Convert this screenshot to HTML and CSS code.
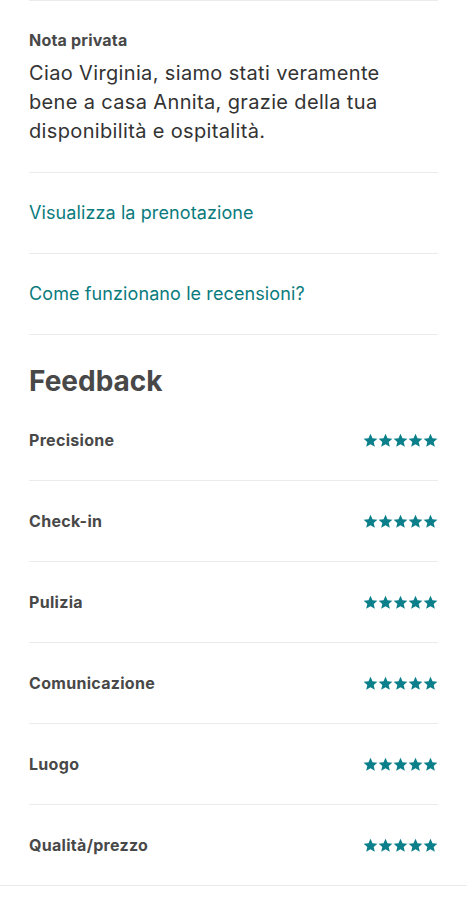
FILE: index.html
```html
<!DOCTYPE html>
<html lang="it">
<head>
<meta charset="utf-8">
<link rel="stylesheet" href="styles.css">
</head>
<body>
<main class="page">
  <div class="inner">
    <section class="note">
      <div class="label">Nota privata</div>
      <p class="note-text">Ciao Virginia, siamo stati veramente bene a casa Annita, grazie della tua disponibilità e ospitalità.</p>
    </section>
    <div class="link-row"><a class="link">Visualizza la prenotazione</a></div>
    <div class="link-row"><a class="link">Come funzionano le recensioni?</a></div>
    <section class="feedback">
      <h2 class="title">Feedback</h2>
      <div class="rows">
        <div class="row"><span class="row-label">Precisione</span><span class="stars"></span></div>
        <div class="row"><span class="row-label">Check-in</span><span class="stars"></span></div>
        <div class="row"><span class="row-label">Pulizia</span><span class="stars"></span></div>
        <div class="row"><span class="row-label">Comunicazione</span><span class="stars"></span></div>
        <div class="row"><span class="row-label">Luogo</span><span class="stars"></span></div>
        <div class="row"><span class="row-label">Qualità/prezzo</span><span class="stars"></span></div>
      </div>
    </section>
  </div>
  <div class="bottom-rule"></div>
</main>
<script>
document.querySelectorAll('.stars').forEach(function(s){
  var svg='';
  for(var i=0;i<5;i++){
    svg+='<svg class="star" viewBox="0 0 24 24" width="15" height="15"><path d="M12 1.2l3.2 7.2 7.8.7-5.9 5.2 1.8 7.7L12 18l-6.9 4 1.8-7.7L1 9.1l7.8-.7z"/></svg>';
  }
  s.innerHTML=svg;
});
</script>
</body>
</html>
```
FILE: styles.css
```css
html, body { margin: 0; padding: 0; background: #fff; }
body { font-family: Inter, "Noto Sans", sans-serif; color: #484848; }
.page { width: 467px; }
.inner { margin: 0 29px; border-top: 1px solid #ebebeb; }
.note { padding: 29px 0 26px; border-bottom: 1px solid #ebebeb; }
.label { font-size: 16px; line-height: 20px; font-weight: 700; letter-spacing: 0.2px; }
.note-text { margin: 9px 0 0; max-width: 380px; font-size: 20px; line-height: 29px; font-weight: 400; letter-spacing: 0.35px; color: #333; }
.link-row { padding: 28px 0; border-bottom: 1px solid #ebebeb; }
.link { display: block; font-size: 18px; line-height: 24px; color: #0a7b7d; text-decoration: none; letter-spacing: 0.1px; }
.feedback { padding-top: 30px; }
.title { margin: 0; font-size: 28px; line-height: 32px; font-weight: 700; }
.rows { margin-top: 3px; }
.row { display: flex; justify-content: space-between; align-items: center; padding: 30px 0; line-height: 20px; }
.row + .row { border-top: 1px solid #ebebeb; }
.row-label { font-size: 16px; font-weight: 700; letter-spacing: 0.3px; }
.stars { display: flex; }
.star { fill: #0b7f8a; display: block; }
.bottom-rule { border-top: 1px solid #ebebeb; }
```
